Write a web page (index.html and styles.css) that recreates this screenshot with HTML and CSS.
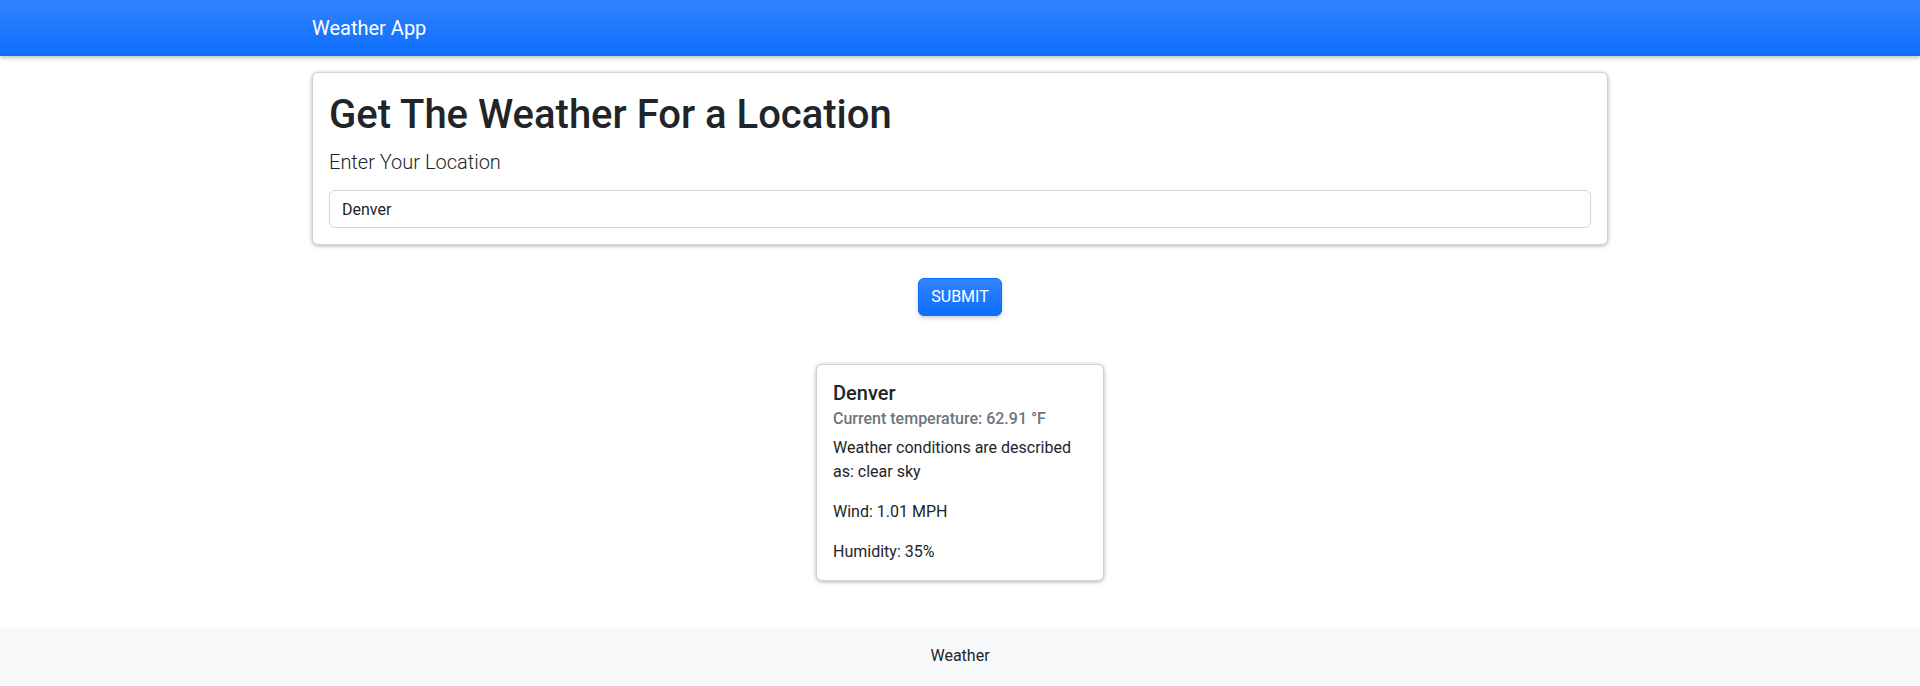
FILE: index.html
```html
<!DOCTYPE html>
<html lang="en">
<head>
<meta charset="utf-8">
<title>Weather App</title>
<link rel="stylesheet" href="styles.css">
</head>
<body>
<nav class="navbar">
  <div class="container">
    <a class="brand" href="#">Weather App</a>
  </div>
</nav>
<main class="container">
  <section class="card search-card">
    <h1 class="title">Get The Weather For a Location</h1>
    <label class="lead" for="loc">Enter Your Location</label>
    <input id="loc" class="form-control" type="text" value="Denver">
  </section>
  <div class="actions">
    <button class="btn" type="button">Submit</button>
  </div>
  <section class="card weather-card">
    <h5 class="card-title">Denver</h5>
    <h6 class="card-subtitle">Current temperature: 62.91 °F</h6>
    <p class="card-text">Weather conditions are described as: clear sky</p>
    <p class="card-text">Wind: 1.01 MPH</p>
    <p class="card-text">Humidity: 35%</p>
  </section>
</main>
<footer class="footer">Weather</footer>
</body>
</html>
```
FILE: styles.css
```css
* { box-sizing: border-box; }
html, body { margin: 0; padding: 0; }
body {
  font-family: Roboto, "Liberation Sans", sans-serif;
  font-size: 16px;
  line-height: 1.5;
  color: #212529;
  background: #fff;
}
.container {
  max-width: 1320px;
  margin: 0 auto;
  padding: 0 12px;
}
.navbar {
  height: 56px;
  background-color: #0d6efd;
  background-image: linear-gradient(180deg, rgba(255,255,255,0.15), rgba(255,255,255,0));
  box-shadow: 0 2px 4px rgba(0,0,0,0.25);
  display: flex;
  align-items: center;
  position: relative;
  z-index: 2;
}
.navbar .container { width: 100%; }
.brand {
  color: #fff;
  text-decoration: none;
  font-size: 20px;
  line-height: 30px;
}
.card {
  background: #fff;
  border: 1px solid rgba(0,0,0,0.175);
  border-radius: 6px;
  box-shadow: 0 1px 4px rgba(0,0,0,0.3);
  padding: 16px;
}
.search-card {
  margin-top: 16px;
}
.title {
  font-size: 40px;
  font-weight: 500;
  line-height: 1.2;
  margin: 0 0 8px;
  padding-top: 2px;
}
.lead {
  display: block;
  font-size: 20px;
  font-weight: 300;
  line-height: 30px;
  margin-bottom: 13px;
}
.form-control {
  display: block;
  width: 100%;
  height: 38px;
  padding: 6px 12px;
  font-family: inherit;
  font-size: 16px;
  line-height: 1.5;
  color: #212529;
  border: 1px solid #d3d6da;
  border-radius: 6px;
  background: #fff;
}
.actions {
  display: flex;
  justify-content: center;
  margin-top: 33px;
}
.btn {
  font-family: inherit;
  font-size: 16px;
  line-height: 24px;
  padding: 6px 12px;
  color: #fff;
  text-transform: uppercase;
  background-color: #0d6efd;
  background-image: linear-gradient(180deg, rgba(255,255,255,0.15), rgba(255,255,255,0));
  border: 1px solid #0d6efd;
  border-radius: 6px;
  box-shadow: 0 2px 4px rgba(0,0,0,0.2);
}
.weather-card {
  width: 288px;
  margin: 48px auto 0;
}
.card-title {
  font-size: 20px;
  font-weight: 500;
  line-height: 1.2;
  margin: 0 0 8px;
}
.card-subtitle {
  font-size: 16px;
  font-weight: 500;
  line-height: 1.2;
  color: #6c757d;
  margin: -4px 0 8px;
}
.card-text {
  margin: 0 0 16px;
}
.card-text:last-child { margin-bottom: 0; }
.footer {
  margin-top: 47px;
  background: #f8f9fa;
  text-align: center;
  padding: 16px 0 17px;
  line-height: 24px;
}
```
